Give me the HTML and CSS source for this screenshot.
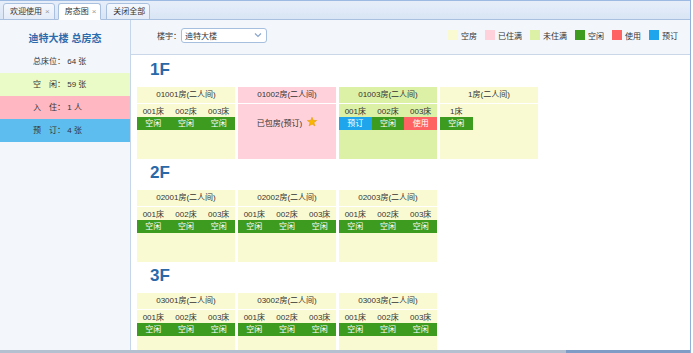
FILE: index.html
```html
<!DOCTYPE html>
<html lang="zh-CN">
  <head>
    <meta charset="UTF-8" />
    <meta name="viewport" content="width=device-width, initial-scale=1.0" />
    <title>房态图</title>
    <link rel="stylesheet" href="styles.css">
  </head>
  <body>
    <div class="app">
      <div class="tabs">
        <div class="tab">欢迎使用<span class="x">×</span></div>
        <div class="tab active">房态图<span class="x">×</span></div>
        <div class="tab close-all">关闭全部</div>
      </div>

      <div class="body">
        <aside class="side">
          <h2>迪特大楼 总房态</h2>
          <div class="stat">总床位：&nbsp;64 张</div>
          <div class="stat free">空　闲：&nbsp;59 张</div>
          <div class="stat live">入　住：&nbsp;1 人</div>
          <div class="stat book">预　订：&nbsp;4 张</div>
        </aside>

        <main class="main">
          <div class="toolbar">
            <div class="filter">
              <label>楼宇：</label>
              <div class="select">
                <span>迪特大楼</span>
                <svg width="8" height="6" viewBox="0 0 8 6"><path d="M1 1.5 L4 4.5 L7 1.5" fill="none" stroke="#8aa6cc" stroke-width="1.2"/></svg>
              </div>
            </div>
            <div class="legend">
              <div class="lg"><i class="sw c-empty"></i>空房</div>
              <div class="lg"><i class="sw c-full"></i>已住满</div>
              <div class="lg"><i class="sw c-part"></i>未住满</div>
              <div class="lg"><i class="sw c-free"></i>空闲</div>
              <div class="lg"><i class="sw c-use"></i>使用</div>
              <div class="lg"><i class="sw c-book"></i>预订</div>
            </div>
          </div>

          <div class="floors">
            <section class="floor">
              <h3>1F</h3>
              <div class="rooms">
                <div class="room">
                  <div class="room-head">01001房(二人间)</div>
                  <div class="beds">
                    <div class="bed"><div class="bed-no">001床</div><div class="bed-st">空闲</div></div>
                    <div class="bed"><div class="bed-no">002床</div><div class="bed-st">空闲</div></div>
                    <div class="bed"><div class="bed-no">003床</div><div class="bed-st">空闲</div></div>
                  </div>
                </div>
                <div class="room full">
                  <div class="room-head">01002房(二人间)</div>
                  <div class="whole">已包房(预订)
                    <svg class="star" width="10" height="10" viewBox="0 0 10 10"><polygon points="5,0.3 6.2,3.4 9.6,3.5 6.9,5.6 7.9,8.9 5,7 2.1,8.9 3.1,5.6 0.4,3.5 3.8,3.4" fill="#f8b800" stroke="#e59a00" stroke-width="0.6"/></svg>
                  </div>
                </div>
                <div class="room part">
                  <div class="room-head">01003房(二人间)</div>
                  <div class="beds">
                    <div class="bed"><div class="bed-no">001床</div><div class="bed-st book">预订</div></div>
                    <div class="bed"><div class="bed-no">002床</div><div class="bed-st">空闲</div></div>
                    <div class="bed"><div class="bed-no">003床</div><div class="bed-st use">使用</div></div>
                  </div>
                </div>
                <div class="room">
                  <div class="room-head">1房(二人间)</div>
                  <div class="beds">
                    <div class="bed"><div class="bed-no">1床</div><div class="bed-st">空闲</div></div>
                  </div>
                </div>
              </div>
            </section>

            <section class="floor">
              <h3>2F</h3>
              <div class="rooms">
                <div class="room">
                  <div class="room-head">02001房(二人间)</div>
                  <div class="beds">
                    <div class="bed"><div class="bed-no">001床</div><div class="bed-st">空闲</div></div>
                    <div class="bed"><div class="bed-no">002床</div><div class="bed-st">空闲</div></div>
                    <div class="bed"><div class="bed-no">003床</div><div class="bed-st">空闲</div></div>
                  </div>
                </div>
                <div class="room">
                  <div class="room-head">02002房(二人间)</div>
                  <div class="beds">
                    <div class="bed"><div class="bed-no">001床</div><div class="bed-st">空闲</div></div>
                    <div class="bed"><div class="bed-no">002床</div><div class="bed-st">空闲</div></div>
                    <div class="bed"><div class="bed-no">003床</div><div class="bed-st">空闲</div></div>
                  </div>
                </div>
                <div class="room">
                  <div class="room-head">02003房(二人间)</div>
                  <div class="beds">
                    <div class="bed"><div class="bed-no">001床</div><div class="bed-st">空闲</div></div>
                    <div class="bed"><div class="bed-no">002床</div><div class="bed-st">空闲</div></div>
                    <div class="bed"><div class="bed-no">003床</div><div class="bed-st">空闲</div></div>
                  </div>
                </div>
              </div>
            </section>

            <section class="floor">
              <h3>3F</h3>
              <div class="rooms">
                <div class="room">
                  <div class="room-head">03001房(二人间)</div>
                  <div class="beds">
                    <div class="bed"><div class="bed-no">001床</div><div class="bed-st">空闲</div></div>
                    <div class="bed"><div class="bed-no">002床</div><div class="bed-st">空闲</div></div>
                    <div class="bed"><div class="bed-no">003床</div><div class="bed-st">空闲</div></div>
                  </div>
                </div>
                <div class="room">
                  <div class="room-head">03002房(二人间)</div>
                  <div class="beds">
                    <div class="bed"><div class="bed-no">001床</div><div class="bed-st">空闲</div></div>
                    <div class="bed"><div class="bed-no">002床</div><div class="bed-st">空闲</div></div>
                    <div class="bed"><div class="bed-no">003床</div><div class="bed-st">空闲</div></div>
                  </div>
                </div>
                <div class="room">
                  <div class="room-head">03003房(二人间)</div>
                  <div class="beds">
                    <div class="bed"><div class="bed-no">001床</div><div class="bed-st">空闲</div></div>
                    <div class="bed"><div class="bed-no">002床</div><div class="bed-st">空闲</div></div>
                    <div class="bed"><div class="bed-no">003床</div><div class="bed-st">空闲</div></div>
                  </div>
                </div>
              </div>
            </section>
          </div>
        </main>
      </div>
      <div class="bottom"></div>
    </div>
  </body>
</html>
```

FILE: styles.css
```css
body {
  margin: 0;
  font-family: "Liberation Sans", "Noto Sans CJK SC", sans-serif;
  font-size: 8px;
  color: #333;
  background: #fff;
}

.app {
  width: 690px;
  height: 353px;
  border-right: 1px solid #8fb0da;
  display: flex;
  flex-direction: column;
  overflow: hidden;
}

/* tabs */
.tabs {
  height: 20px;
  box-sizing: border-box;
  border-top: 1px solid #9dbbe2;
  border-bottom: 1px solid #a9c1df;
  background: linear-gradient(#e7eefa, #d9e5f5);
  display: flex;
  align-items: flex-end;
  gap: 3px;
  padding-left: 3px;
  flex: none;
}

.tab {
  height: 17px;
  box-sizing: border-box;
  border: 1px solid #a9c1df;
  border-radius: 3px 3px 0 0;
  padding: 0 4px 0 6px;
  line-height: 15px;
  margin-bottom: -1px;
  background: linear-gradient(#f5f8fd, #e4ecf8);
  color: #333;
}

.tab.active {
  background: #fff;
  border-bottom-color: #fff;
}

.tab.close-all {
  margin-left: 2px;
}

.tab .x {
  color: #9a9a9a;
  margin-left: 3px;
}

/* layout */
.body {
  flex: 1;
  display: flex;
  min-height: 0;
}

.side {
  width: 130px;
  flex: none;
  border-right: 1px solid #c6d6ea;
  background: #f3f6fb;
}

.side h2 {
  margin: 0;
  padding-top: 12px;
  height: 18px;
  line-height: 13px;
  font-size: 10px;
  font-weight: bold;
  color: #2c6cae;
  text-align: center;
}

.stat {
  height: 23px;
  line-height: 23px;
  padding-left: 33px;
}

.stat.free {
  background: #ebfbc7;
}

.stat.live {
  background: #ffb7c2;
}

.stat.book {
  background: #5dbdee;
}

.main {
  flex: 1;
  min-width: 0;
  display: flex;
  flex-direction: column;
}

/* toolbar */
.toolbar {
  height: 34px;
  flex: none;
  border-bottom: 1px solid #c9d7e9;
  background: #f3f7fc;
  display: flex;
  align-items: center;
  justify-content: space-between;
  padding: 0 12px 0 26px;
}

.toolbar > div {
  margin-bottom: 4px;
}

.filter {
  display: flex;
  align-items: center;
}

.select {
  width: 86px;
  height: 15px;
  box-sizing: border-box;
  border: 1px solid #a6bfdf;
  border-radius: 3px;
  background: #fff;
  padding: 0 4px 0 3px;
  display: flex;
  align-items: center;
  justify-content: space-between;
}

.legend {
  display: flex;
  align-items: center;
}

.lg {
  display: flex;
  align-items: center;
  gap: 3px;
  margin-left: 8px;
}

.sw {
  width: 10px;
  height: 10px;
  display: block;
}

.c-empty { background: #fafad2; }
.c-full { background: #ffd1da; }
.c-part { background: #dcf0a6; }
.c-free { background: #3d9b1f; }
.c-use { background: #ff6262; }
.c-book { background: #1ea5ec; }

/* floors */
.floors {
  flex: 1;
  overflow: hidden;
  padding: 5px 0 0 6px;
}

.floor {
  margin-bottom: 4px;
}

.floor h3 {
  margin: 0 0 7px 13px;
  font-size: 17px;
  line-height: 20px;
  font-weight: bold;
  color: #2a68a8;
}

.rooms {
  display: flex;
  gap: 3px;
}

.room {
  width: 98px;
  height: 72px;
  background: #fafad2;
}

.room.full {
  background: #ffd1da;
}

.room.part {
  background: #dcf0a6;
}

.room-head {
  height: 16px;
  line-height: 16px;
  text-align: center;
  border-bottom: 1px solid #fff;
}

.beds {
  display: grid;
  grid-template-columns: repeat(3, 1fr);
}

.bed-no {
  height: 11px;
  line-height: 11px;
  padding-top: 2px;
  text-align: center;
}

.bed-st {
  height: 13px;
  line-height: 13px;
  text-align: center;
  color: #fff;
  background: #3d9b1f;
}

.bed-st.book {
  background: #1ea5ec;
}

.bed-st.use {
  background: #ff6262;
}

.whole {
  padding-top: 13px;
  line-height: 13px;
  text-align: center;
}

.star {
  margin-left: 3px;
  vertical-align: -1px;
}

.bottom {
  height: 3px;
  flex: none;
  background: linear-gradient(to right, #b4c0cf 82%, #7f9cc6 82%);
}
```
